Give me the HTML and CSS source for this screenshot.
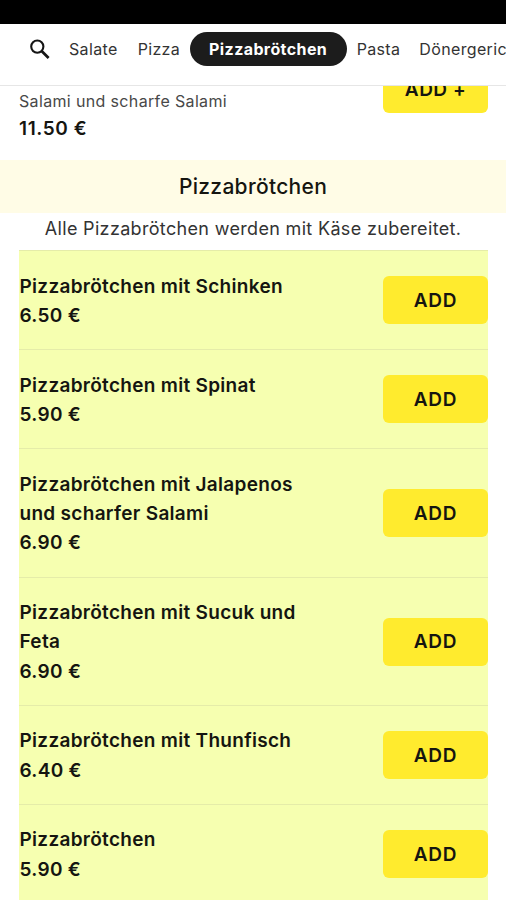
FILE: index.html
```html
<!DOCTYPE html>
<html lang="de">
<head>
  <meta charset="UTF-8" />
  <title>Speisekarte - Pizzabrötchen</title>
  <meta name="viewport" content="width=device-width, initial-scale=1" />
  <link rel="stylesheet" href="styles.css">
</head>
<body>
  <header class="top">
    <div class="status-bar"></div>
    <nav class="categories">
      <svg class="search" viewBox="0 0 22 22" fill="none" stroke="#151515" aria-label="Suche">
        <circle cx="8.3" cy="8.6" r="6.1" stroke-width="2.1" />
        <path d="M12.6 13L19.6 20" stroke-width="2.8" />
      </svg>
      <a href="#" class="salate">Salate</a>
      <a href="#" class="pizza">Pizza</a>
      <a href="#" class="active">Pizzabrötchen</a>
      <a href="#" class="pasta">Pasta</a>
      <a href="#" class="doener">Dönergerichte</a>
    </nav>
  </header>

  <main>
    <section class="previous">
      <div class="details">
        <p class="description">Salami und scharfe Salami</p>
        <p class="price">11.50 €</p>
      </div>
      <button class="add">ADD +</button>
    </section>

    <h2 class="section-title">Pizzabrötchen</h2>
    <p class="section-note">Alle Pizzabrötchen werden mit Käse zubereitet.</p>

    <ul class="items">
      <li class="item">
        <div class="details">
          <h3>Pizzabrötchen mit Schinken</h3>
          <p class="price">6.50 €</p>
        </div>
        <button class="add">ADD</button>
      </li>
      <li class="item">
        <div class="details">
          <h3>Pizzabrötchen mit Spinat</h3>
          <p class="price">5.90 €</p>
        </div>
        <button class="add">ADD</button>
      </li>
      <li class="item">
        <div class="details">
          <h3>Pizzabrötchen mit Jalapenos und scharfer Salami</h3>
          <p class="price">6.90 €</p>
        </div>
        <button class="add">ADD</button>
      </li>
      <li class="item">
        <div class="details">
          <h3>Pizzabrötchen mit Sucuk und Feta</h3>
          <p class="price">6.90 €</p>
        </div>
        <button class="add">ADD</button>
      </li>
      <li class="item">
        <div class="details">
          <h3>Pizzabrötchen mit Thunfisch</h3>
          <p class="price">6.40 €</p>
        </div>
        <button class="add">ADD</button>
      </li>
      <li class="item">
        <div class="details">
          <h3>Pizzabrötchen</h3>
          <p class="price">5.90 €</p>
        </div>
        <button class="add">ADD</button>
      </li>
    </ul>
  </main>
</body>
</html>
```
FILE: styles.css
```css
:root {
  --yellow: #ffeb2e;
  --lime: #f6ffb0;
  --cream: #fffce6;
  --text-color: #151510;
  --light-text: #484848;
}

* {
  box-sizing: border-box;
  margin: 0;
  padding: 0;
}

body {
  font-family: Inter, 'Liberation Sans', sans-serif;
  background: #fff;
  color: var(--text-color);
  height: 900px;
  overflow: hidden;
}

.status-bar {
  height: 24px;
  background: #000;
}

.categories {
  display: flex;
  align-items: center;
  height: 62px;
  padding: 0 0 11px 29px;
  border-bottom: 1px solid #e6e6e6;
  white-space: nowrap;
  overflow: hidden;
}

.categories a {
  flex: none;
  color: #333;
  text-decoration: none;
  font-size: 16px;
  letter-spacing: 0.35px;
}

.search {
  flex: none;
  width: 22px;
  height: 22px;
}

.salate {
  margin-left: 18px;
}

.pizza {
  margin-left: 20px;
}

.categories .active {
  width: 157px;
  height: 34px;
  margin-left: 9.5px;
  border-radius: 17px;
  background: #1c1c1c;
  color: #fff;
  font-weight: 700;
  line-height: 34px;
  letter-spacing: 0.4px;
  text-align: center;
}

.pasta {
  margin-left: 10px;
}

.doener {
  margin-left: 19px;
}

.previous {
  display: flex;
  justify-content: space-between;
  height: 74px;
  padding: 0 18px 0 19px;
  overflow: hidden;
}

.description {
  color: var(--light-text);
  font-size: 16px;
  line-height: 30px;
  letter-spacing: 0.35px;
}

.price,
.item h3 {
  font-size: 19px;
  font-weight: 600;
  line-height: 29.4px;
  letter-spacing: 0.3px;
}

.previous .price {
  line-height: 25px;
  letter-spacing: 0.6px;
}

.add {
  flex: none;
  width: 105px;
  height: 48px;
  border: none;
  border-radius: 6px;
  background: var(--yellow);
  color: var(--text-color);
  font-family: inherit;
  font-size: 19px;
  font-weight: 600;
  letter-spacing: 0.7px;
  cursor: pointer;
}

/* scrolled partly under the category bar */
.previous .add {
  margin-top: -21px;
  letter-spacing: 0.5px;
}

.section-title {
  height: 53px;
  background: var(--cream);
  font-size: 21px;
  font-weight: 500;
  line-height: 53px;
  letter-spacing: 0.3px;
  text-align: center;
}

.section-note {
  height: 37.4px;
  color: #333;
  font-size: 18px;
  line-height: 32px;
  letter-spacing: 0.33px;
  text-align: center;
}

.items {
  margin: 0 18px 0 19px;
  background: var(--lime);
  list-style: none;
}

.item {
  display: flex;
  align-items: center;
  justify-content: space-between;
  padding: 19.6px 0;
  border-top: 1px solid #e5eca9;
}

.item .details {
  width: 300px;
  margin: 0.7px 0 -0.7px;
  padding-left: 0.5px;
}
```
